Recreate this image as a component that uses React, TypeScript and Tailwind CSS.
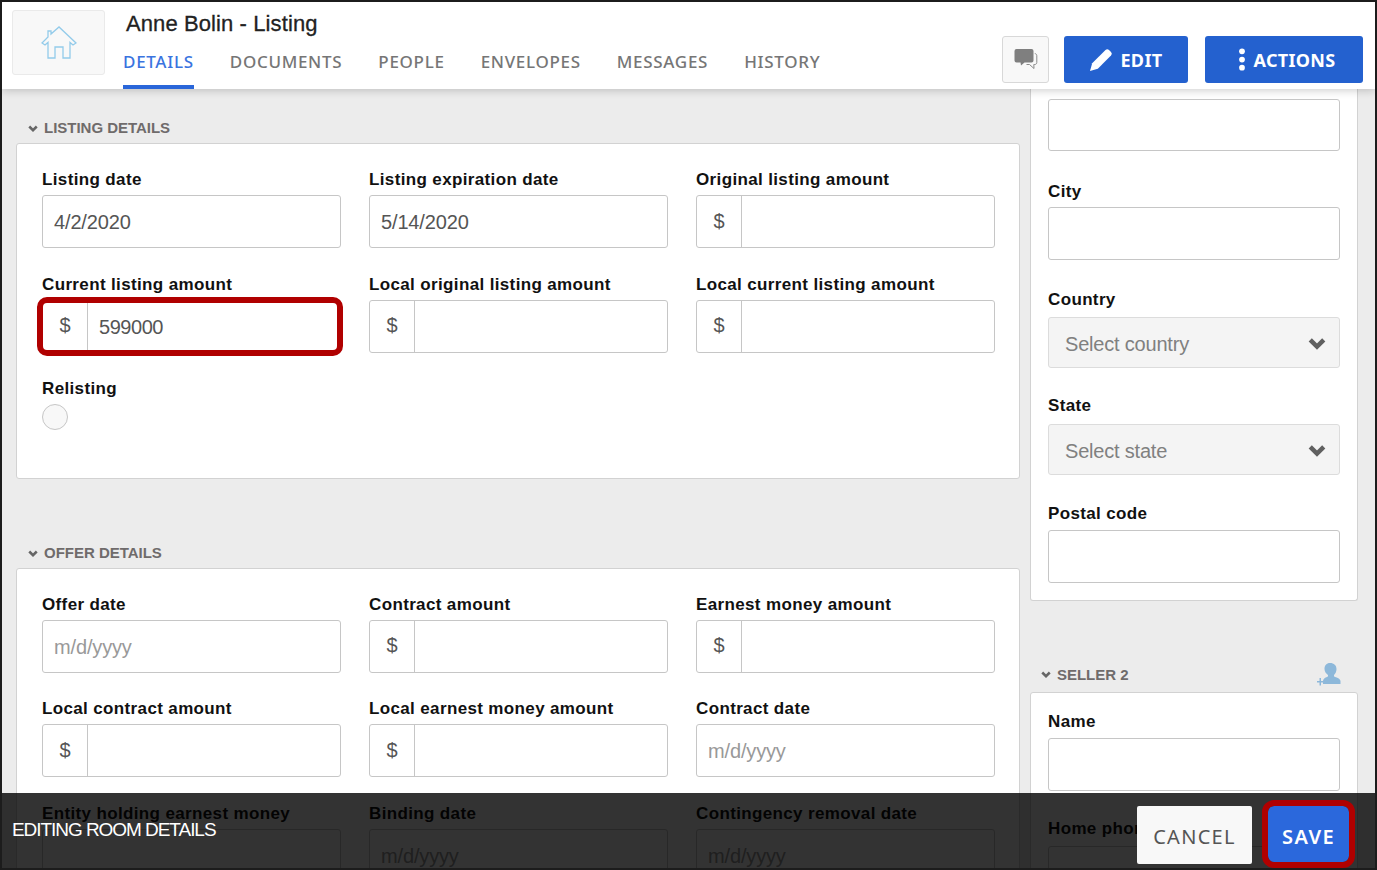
const ARIAL = "font-['Liberation_Sans',Arial,sans-serif]";
const TABS = "font-['Noto_Sans','Open_Sans',sans-serif]";

// thick chevron used by the section headings and selects
const Chevron = ({ className }: { className: string }) => (
  <svg viewBox="0 0 20 14" className={className} fill="none" stroke="currentColor" strokeWidth="5">
    <path d="M2.5 3 10 10.5 17.5 3" />
  </svg>
);

const Label = ({ text, gap = "" }: { text: string; gap?: string }) => (
  <div className={`flex h-[27px] items-center pb-[3px] text-[17px] font-bold tracking-[0.36px] whitespace-nowrap text-[#111] ${gap}`}>
    {text}
  </div>
);

const TextField = ({ label, value, placeholder, gap }: { label: string; value?: string; placeholder?: string; gap?: string }) => (
  <div>
    <Label text={label} gap={gap} />
    <div className="flex h-[53px] items-center rounded-[3px] border border-[#c6c6c6] bg-white px-[11px] pt-[1px] text-[20px] tracking-[-0.15px] whitespace-nowrap">
      {value && <span className="text-[#555]">{value}</span>}
      {placeholder && <span className="text-[#999]">{placeholder}</span>}
    </div>
  </div>
);

const MoneyField = ({ label, value, highlight }: { label: string; value?: string; highlight?: boolean }) => (
  <div>
    <Label text={label} />
    <div className="relative flex h-[53px] items-stretch rounded-[3px] border border-[#c6c6c6] bg-white text-[20px] text-[#555]">
      <div className="flex w-[45px] items-center justify-center border-r border-[#c6c6c6] pb-[2px]">$</div>
      <div className="flex items-center px-[11px] pt-[1px] tracking-[-0.45px]">{value}</div>
      {highlight && (
        <div className="absolute top-[-4px] right-[-3px] bottom-[-4px] left-[-6px] rounded-[10px] border-[6px] border-[#b00000]" />
      )}
    </div>
  </div>
);

const SectionHeading = ({ text }: { text: string }) => (
  <div className="flex h-[25px] items-center gap-[6px] pl-[12px] pb-[4px] text-[15px] font-bold tracking-[-0.02px] whitespace-nowrap text-[#6f6b6b]">
    <Chevron className="h-[7px] w-[10px] text-[#666]" />
    {text}
  </div>
);

const SelectField = ({ label, placeholder, gap }: { label: string; placeholder: string; gap: string }) => (
  <div>
    <Label text={label} gap={gap} />
    <div className="flex h-[51px] items-center justify-between rounded-[3px] border border-[#dcdcdc] bg-[#f4f4f4] pt-[2px] pr-[13px] pl-[16px] text-[20px] tracking-[-0.2px] text-[#808080]">
      {placeholder}
      <Chevron className="h-[13px] w-[18px] text-[#606060]" />
    </div>
  </div>
);

const TAB_NAMES = ["DETAILS", "DOCUMENTS", "PEOPLE", "ENVELOPES", "MESSAGES", "HISTORY"];

const Header = () => (
  <div className="relative z-10 flex h-[87px] shrink-0 bg-white shadow-[0_2px_8px_rgba(0,0,0,0.18)]">
    <div className="mt-[8px] ml-[10px] flex h-[65px] w-[93px] items-center justify-center rounded-[3px] border border-[#eaeaea] bg-[#f8f8f8]">
      <svg viewBox="0 0 36 34" className="h-[34px] w-[36px]" fill="none" stroke="#93cbea" strokeWidth="1.3">
        <path d="M1 17 7 11V5h3v3l8-7 17 16-3 2-3-2.500V32h-7V21h-8v11H7V16.500L4 19z" />
      </svg>
    </div>
    <div className="ml-[18px] flex flex-col">
      <div className="mt-[9px] ml-[3px] text-[22px] leading-[26px] tracking-[0.1px] whitespace-nowrap text-[#222] [-webkit-text-stroke:0.3px_#222]">
        Anne Bolin - Listing
      </div>
      <div className={`mt-[6px] flex gap-[36px] ${TABS}`}>
        {TAB_NAMES.map((tab, index) => (
          <div
            key={tab}
            className={
              index === 0
                ? "h-[46px] border-b-4 border-[#2a66d9] pt-[6px] text-[17px] font-medium tracking-[0.7px] text-[#3a74df]"
                : "h-[46px] pt-[6px] text-[17px] font-medium tracking-[0.7px] text-[#767676]"
            }
          >
            {tab}
          </div>
        ))}
      </div>
    </div>
    <div className={`ml-auto mr-[12px] mt-[34px] flex h-[47px] items-start ${TABS}`}>
      <div className="flex h-[47px] w-[47px] items-center justify-center rounded-[3px] border border-[#d8d8d8] bg-[#f8f8f8]">
        <svg viewBox="0 0 24 23" className="h-[23px] w-[24px]">
          <path d="M2.500 1h15a2 2 0 0 1 2 2v9.500a2 2 0 0 1-2 2h-7l-3.500 3-.5-3H2.500a2 2 0 0 1-2-2V3a2 2 0 0 1 2-2z" fill="#7f7f7f" />
          <path d="M20.800 5.500c1.200.2 2 1 2 2.200v6.800c0 1.200-.9 2-2 2h-1l.2 4-4.500-4h-3" fill="none" stroke="#8a8a8a" strokeWidth="1" />
        </svg>
      </div>
      <div className="ml-[15px] flex h-[47px] w-[124px] items-center justify-center gap-[7px] rounded-[3px] bg-[#2461cf] pt-[2px] text-[18px] font-bold tracking-[0.4px] text-white">
        <svg viewBox="0 0 24 24" className="mb-[2px] h-[24px] w-[24px]" fill="white">
          <path d="M1 23l2.200-7.800L16.500 2a2.500 2.500 0 0 1 3.500 0l2 2a2.500 2.500 0 0 1 0 3.500L8.800 20.800z" />
        </svg>
        EDIT
      </div>
      <div className="ml-[17px] flex h-[47px] w-[158px] items-center justify-center gap-[8px] rounded-[3px] bg-[#2461cf] pt-[2px] pl-[5px] text-[18px] font-bold tracking-[0.3px] text-white">
        <svg viewBox="0 0 8 24" className="mb-[2px] h-[23px] w-[8px]" fill="white">
          <circle cx="4" cy="3.500" r="3" />
          <circle cx="4" cy="12" r="3" />
          <circle cx="4" cy="20.500" r="3" />
        </svg>
        ACTIONS
      </div>
    </div>
  </div>
);

const LeftColumn = () => (
  <div className="w-[1004px] shrink-0 pt-[29px]">
    <SectionHeading text="LISTING DETAILS" />
    <div className="h-[336px] rounded-[3px] border border-[#d2d2d2] bg-white pt-[24px] pl-[25px]">
      <div className="grid w-[953px] grid-cols-[299px_299px_299px] gap-x-[28px] gap-y-[24.500px]">
        <TextField label="Listing date" value="4/2/2020" />
        <TextField label="Listing expiration date" value="5/14/2020" />
        <MoneyField label="Original listing amount" />
        <MoneyField label="Current listing amount" value="599000" highlight />
        <MoneyField label="Local original listing amount" />
        <MoneyField label="Local current listing amount" />
        <div>
          <Label text="Relisting" />
          <div className="h-[26px] w-[26px] rounded-full border border-[#c6c6c6] bg-[#f8f8f8]" />
        </div>
      </div>
    </div>
    <div className="h-[64px]" />
    <SectionHeading text="OFFER DETAILS" />
    <div className="h-[400px] rounded-[3px] border border-[#d2d2d2] bg-white pt-[23.500px] pl-[25px]">
      <div className="grid w-[953px] grid-cols-[299px_299px_299px] gap-x-[28px] gap-y-[24.500px]">
        <TextField label="Offer date" placeholder="m/d/yyyy" />
        <MoneyField label="Contract amount" />
        <MoneyField label="Earnest money amount" />
        <MoneyField label="Local contract amount" />
        <MoneyField label="Local earnest money amount" />
        <TextField label="Contract date" placeholder="m/d/yyyy" />
        <TextField label="Entity holding earnest money" />
        <TextField label="Binding date" placeholder="m/d/yyyy" />
        <TextField label="Contingency removal date" placeholder="m/d/yyyy" />
      </div>
    </div>
  </div>
);

const RightColumn = () => (
  <div className="ml-[10px] w-[328px] shrink-0">
    <div className="flex flex-col rounded-b-[3px] border border-t-0 border-[#d2d2d2] bg-white px-[17px] pt-[10px] pb-[17px]">
      <div className="h-[52px] rounded-[3px] border border-[#c6c6c6] bg-white" />
      <div className="mt-[29px]">
        <TextField label="City" />
      </div>
      <div className="mt-[28px]">
        <SelectField label="Country" placeholder="Select country" gap="mb-[2px]" />
      </div>
      <div className="mt-[26px]">
        <SelectField label="State" placeholder="Select state" gap="mb-[3px]" />
      </div>
      <div className="mt-[27px]">
        <TextField label="Postal code" gap="mb-[1px]" />
      </div>
    </div>
    <div className="flex h-[91px] items-end justify-between pr-[17px] pb-[6px]">
      <div className="flex items-center gap-[6px] pl-[11px] text-[15px] font-bold tracking-[-0.02px] text-[#6f6b6b]">
        <Chevron className="h-[7px] w-[10px] text-[#666]" />
        SELLER 2
      </div>
      <svg viewBox="0 0 24 24" className="h-[24px] w-[24px]" fill="#8db8da">
        <path d="M13 1c4 0 6.500 2.500 6.500 6 0 2.500-1 4.500-2.500 6v1.500c2 1 6 1.500 6.500 4.500v3H6v-3c.5-3 3-3.500 5-4.500V13C9 11.500 7.500 9.500 7.500 7c0-3.500 2-6 5.500-6z" />
        <path d="M2.500 16h1.500v3h3v1.500H4v3H2.500v-3h-2.500V19h2.500z" />
      </svg>
    </div>
    <div className="flex flex-col rounded-[3px] border border-[#d2d2d2] bg-white px-[17px] pt-[17px] pb-[20px]">
      <TextField label="Name" gap="mb-[1px]" />
      <div className="mt-[26px]">
        <TextField label="Home phone" gap="mb-[2px]" />
      </div>
    </div>
  </div>
);

const Footer = () => (
  <div className="absolute right-0 bottom-0 left-0 z-20 flex h-[75px] items-start justify-between bg-black/80">
    <div className="mt-[26px] ml-[10px] text-[19px] leading-[22px] tracking-[-1.05px] text-white">
      EDITING ROOM DETAILS
    </div>
    <div className={`mt-[13px] mr-[26px] flex ${TABS}`}>
      <div className="flex h-[58px] w-[115px] items-center justify-center rounded-[2px] bg-[#f8f8f8] pt-[3px] text-[20px] tracking-[1.3px] text-[#555]">
        CANCEL
      </div>
      <div className="relative ml-[16px] flex h-[56px] w-[81px] items-center justify-center rounded-[6px] bg-[#2b68dc] pt-[5px] text-[20px] font-semibold tracking-[1.4px] text-white">
        SAVE
        <div className="absolute top-[-6px] right-[-6px] bottom-[-6px] left-[-6px] rounded-[12px] border-[6px] border-[#b00000]" />
      </div>
    </div>
  </div>
);

export default function App() {
  return (
    <div className={`relative flex h-[870px] w-[1377px] flex-col overflow-hidden border-2 border-[#1c1c1c] bg-[#ececec] ${ARIAL}`}>
      <Header />
      <div className="flex min-h-0 flex-1 overflow-hidden pl-[14px]">
        <LeftColumn />
        <RightColumn />
      </div>
      <Footer />
    </div>
  );
}
